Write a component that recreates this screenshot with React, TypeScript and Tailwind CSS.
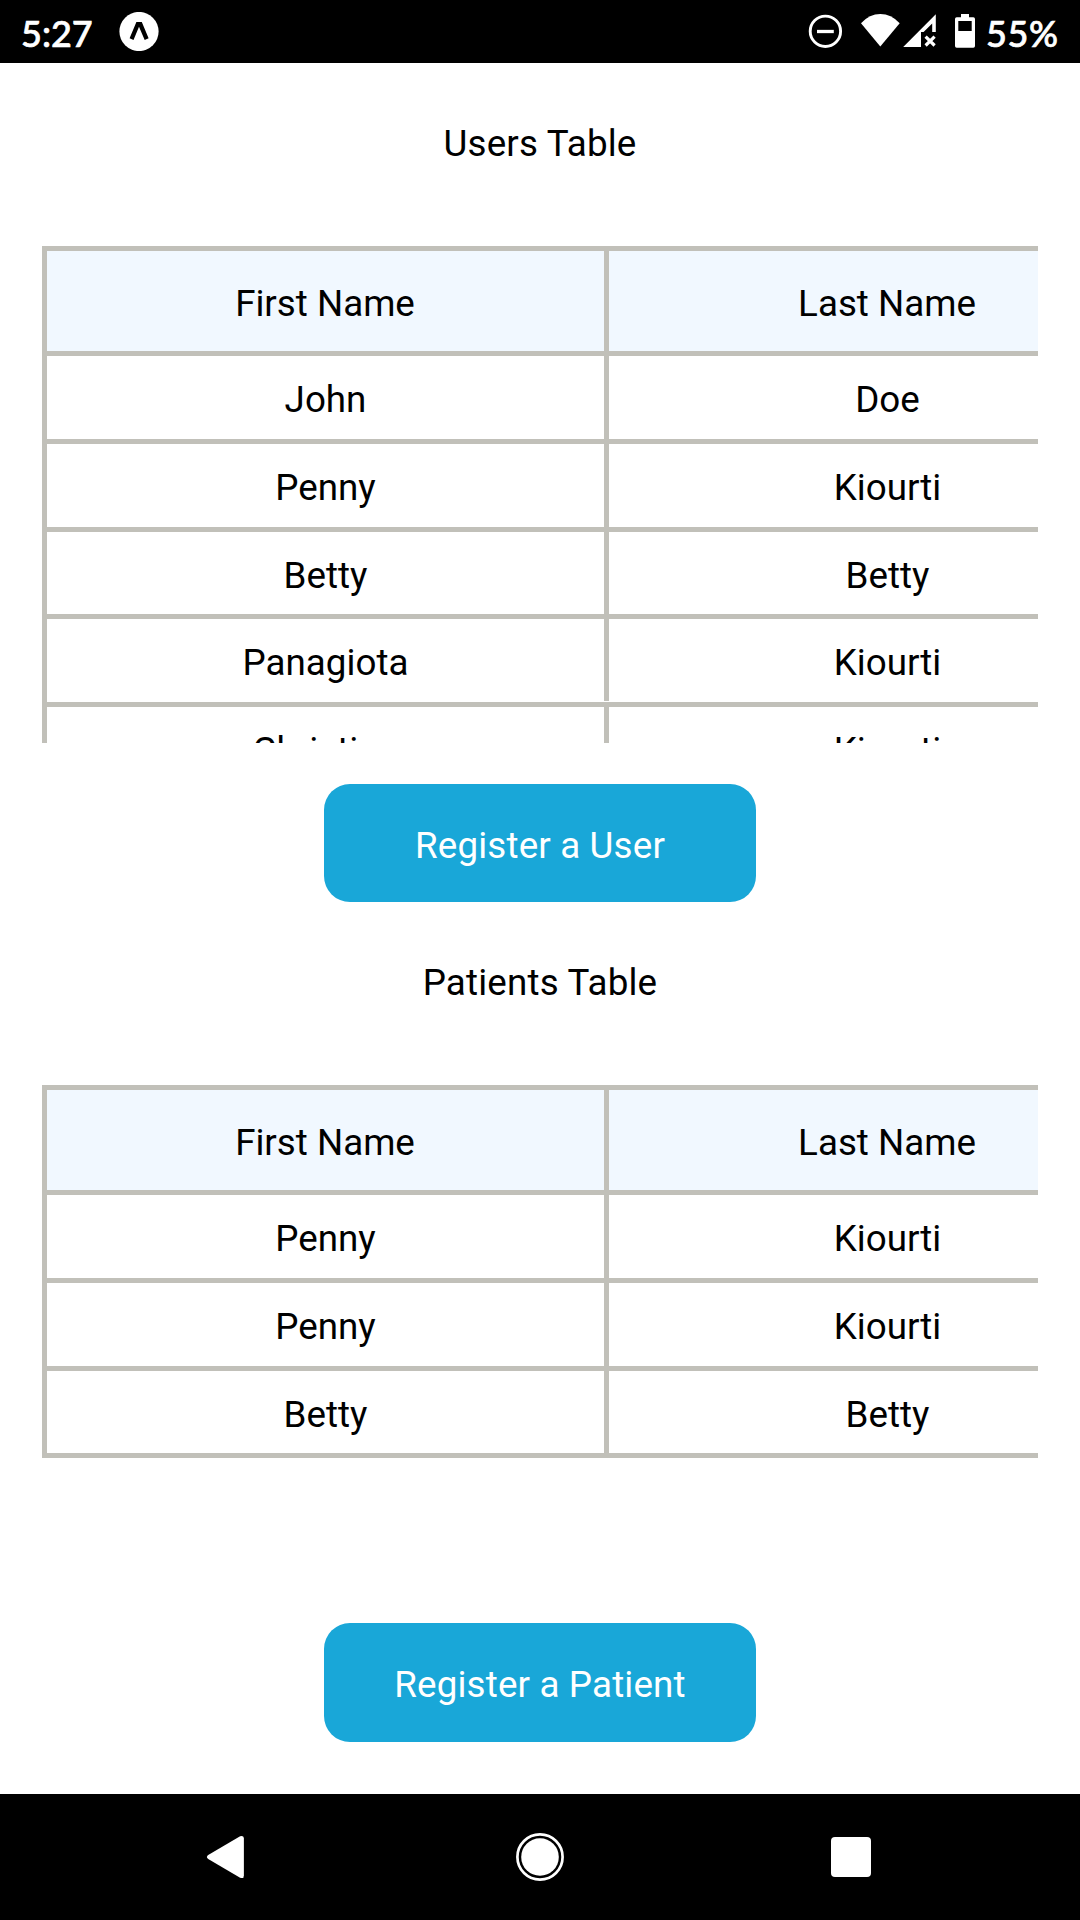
import React from "react";

type Person = { first: string; last: string; height: string; gap?: boolean };

const users: Person[] = [
  { first: "John", last: "Doe", height: "h-[88px]" },
  { first: "Penny", last: "Kiourti", height: "h-[88px]" },
  { first: "Betty", last: "Betty", height: "h-[87px]" },
  { first: "Panagiota", last: "Kiourti", height: "h-[88px]", gap: true },
  { first: "Christina", last: "Kiourti", height: "h-[88px]" },
];

const patients: Person[] = [
  { first: "Penny", last: "Kiourti", height: "h-[88px]" },
  { first: "Penny", last: "Kiourti", height: "h-[88px]" },
  { first: "Betty", last: "Betty", height: "h-[87px]" },
];

function StatusBar() {
  return (
    <header className="flex h-[63px] shrink-0 items-start bg-black font-[Lato,sans-serif] text-[36px] font-medium leading-[44px] text-white [-webkit-text-stroke:0.7px_white]">
      <span className="ml-[21px] mt-[11px] w-[98px]">5:27</span>
      <svg className="mt-3 h-[39px] w-10" viewBox="119 12 40 39">
        <circle cx="139" cy="31.5" r="19.6" fill="#fff" />
        <path d="M136.4 22h5.4l6.8 16.2-3.9 1.9L139 26.8l-5.5 13.3-3.9-1.9z" fill="#000" />
      </svg>
      <svg className="ml-auto mt-3 h-9 w-[36px]" viewBox="808 12 36 36">
        <circle cx="825.4" cy="31.3" r="15.2" fill="none" stroke="#fff" strokeWidth="2.9" />
        <path d="M817 31.5h16.8" stroke="#fff" strokeWidth="3.3" />
      </svg>
      <svg className="ml-4 mt-3 h-9 w-[41px]" viewBox="860 12 41 36">
        <path d="M880.3 46.5L861 23.2Q869.5 14 880.3 14t19.4 9.2z" fill="#fff" />
      </svg>
      <svg className="ml-0.5 mt-3 h-9 w-[34px]" viewBox="903 12 34 36">
        <path
          d="M903.2 47L935.8 14.2V32h-3.6v-8.6L923.6 32H921V47z"
          fill="#fff"
        />
        <path d="M925.6 36.7l9 8.8m0-8.8l-9 8.8" stroke="#fff" strokeWidth="3.2" />
      </svg>
      <svg className="ml-[17px] mt-3 h-9 w-[22px]" viewBox="954 12 22 36">
        <path
          fillRule="evenodd"
          d="M961 14h8v3.3h4.3q1.7 0 1.7 1.7v27q0 1.7-1.7 1.7h-16.6q-1.7 0-1.7-1.7v-27q0-1.7 1.7-1.7H961zM958.3 21v10h13.4V21z"
          fill="#fff"
        />
      </svg>
      <span className="ml-2.5 mt-[11px] w-[94px] tracking-[0.6px]">55%</span>
    </header>
  );
}

function PeopleTable({ rows }: { rows: Person[] }) {
  return (
    <div className="w-[1129px] border-[5px] border-[#c1c0b9] text-center">
      <div className="flex h-[100px] bg-[#f1f8ff]">
        <div className="w-[557px] pr-px pt-[31px]">First Name</div>
        <div className="w-[562px] border-l-[5px] border-[#c1c0b9] pr-px pt-[31px]">Last Name</div>
      </div>
      {rows.map((row, i) => (
        <div key={i} className={`${row.height} flex border-t-[5px] border-[#c1c0b9]`}>
          <div className="w-[557px] pt-[22px]">{row.first}</div>
          <div
            className={`w-[562px] border-l-[5px] border-[#c1c0b9] pt-[22px] ${row.gap ? "mb-px" : ""}`}
          >
            {row.last}
          </div>
        </div>
      ))}
    </div>
  );
}

export default function App() {
  return (
    <div className="flex h-[1920px] w-[1080px] flex-col overflow-hidden bg-white font-[Roboto,sans-serif] text-[36.75px] leading-[43px] text-black">
      <StatusBar />
      <main className="flex flex-1 flex-col items-center">
        <h1 className="mt-[59px] tracking-[0.18px]">Users Table</h1>
        <section className="mt-[81px] h-[497px] w-[996px] overflow-hidden">
          <PeopleTable rows={users} />
        </section>
        <button className="mt-[41px] flex h-[118px] w-[432px] shrink-0 justify-center rounded-[26px] bg-[#19a7d8] pt-10 tracking-[0.16px] text-white">
          Register a User
        </button>
        <h1 className="mt-[59px] tracking-[0.18px]">Patients Table</h1>
        <section className="mt-[81px] h-[497px] w-[996px] overflow-hidden">
          <PeopleTable rows={patients} />
        </section>
        <button className="mt-[41px] flex h-[119px] w-[432px] shrink-0 justify-center rounded-[26px] bg-[#19a7d8] pt-10 tracking-[0.16px] text-white">
          Register a Patient
        </button>
      </main>
      <nav className="flex h-[126px] shrink-0 items-start bg-black">
        <svg className="ml-[206px] mt-[41px] h-[44px] w-[40px]" viewBox="206 1835 40 44">
          <path
            d="M208.2 1855.1L240.1 1836.3Q243.9 1834.8 243.9 1838.6V1875.4Q243.9 1879.2 240.1 1877.7L208.2 1858.9Q205.6 1857 208.2 1855.1z"
            fill="#fff"
          />
        </svg>
        <svg className="ml-[269px] mt-[38px] h-[50px] w-[50px]" viewBox="515 1832 50 50">
          <circle cx="540" cy="1857" r="22.6" fill="none" stroke="#fff" strokeWidth="2.7" />
          <circle cx="540" cy="1857" r="18.8" fill="#fff" />
        </svg>
        <div className="ml-[266px] mt-[43px] h-10 w-10 rounded-[4px] bg-white" />
      </nav>
    </div>
  );
}
